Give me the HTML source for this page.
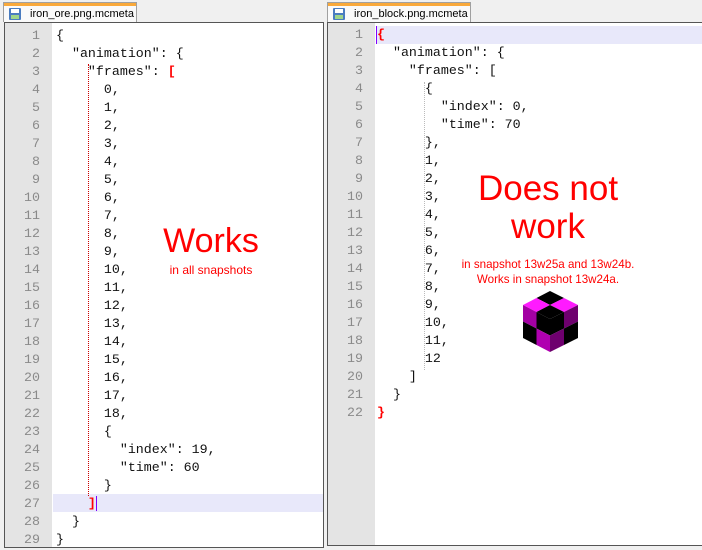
<!DOCTYPE html>
<html><head><style>
body{margin:0;width:702px;height:550px;background:#f0f0f0;position:relative;overflow:hidden;font-family:"Liberation Mono",monospace}
.a{position:absolute}
.tab{position:absolute;top:2px;height:19px;background:#fafafa;border:1px solid #a0a0a0;border-bottom:none;font:11px "Liberation Sans",sans-serif;color:#000}
.tab .o{position:absolute;left:0;right:0;top:0;height:3px;background:#f9a93b}
.tab span{position:absolute;left:26px;top:5px}
.ico{position:absolute;left:5px;top:5px;width:12px;height:12px;background:#4a7cc0;border-radius:1px}
.ico:before{content:"";position:absolute;left:2px;top:1px;width:8px;height:4px;background:#fff}
.ico:after{content:"";position:absolute;left:2px;top:7px;width:8px;height:4px;background:#9fd58a}
.ed{position:absolute;background:#fff;border:1px solid #555}
.g{position:absolute;left:0;top:0;bottom:0;width:47px;background:#e4e4e4}
.ln{position:absolute;width:35px;text-align:right;font-size:13.3px;color:#8a8a8a;line-height:18px}
.code{position:absolute;font-size:13.3px;line-height:18px;white-space:pre;color:#111}
.hl{position:absolute;height:18px;background:#e8e8fa}
.r{color:#f00;font-weight:bold}
.big{position:absolute;color:#f00;font-family:"Liberation Sans",sans-serif;text-align:center}
</style></head><body>
<div class="tab" style="left:3px;width:132px"><div class="o"></div><div class="ico"></div><span>iron_ore.png.mcmeta</span></div>
<div class="tab" style="left:327px;width:142px"><div class="o"></div><div class="ico"></div><span>iron_block.png.mcmeta</span></div>

<div class="ed" style="left:4px;top:22px;width:318px;height:524px">
<div class="g"></div>
<div class="hl" style="left:48px;right:0;top:471px"></div>
<div class="a" style="left:83px;top:41px;height:432px;border-left:1px dotted #c00"></div>
<div class="ln" style="left:0;top:4px">1<br>2<br>3<br>4<br>5<br>6<br>7<br>8<br>9<br>10<br>11<br>12<br>13<br>14<br>15<br>16<br>17<br>18<br>19<br>20<br>21<br>22<br>23<br>24<br>25<br>26<br>27<br>28<br>29</div>
<div class="code" style="left:51px;top:4px">{
  "animation": {
    "frames": <span class="r">[</span>
      0,
      1,
      2,
      3,
      4,
      5,
      6,
      7,
      8,
      9,
      10,
      11,
      12,
      13,
      14,
      15,
      16,
      17,
      18,
      {
        "index": 19,
        "time": 60
      }
    <span class="r">]</span><span style="border-left:1px solid #8000ff"></span>
  }
}</div>
</div>

<div class="ed" style="left:327px;top:22px;width:376px;height:522px;border-right:none">
<div class="g"></div>
<div class="hl" style="left:48px;right:0;top:3px"></div>
<div class="a" style="left:48px;top:3px;height:18px;border-left:1px solid #8000ff"></div>
<div class="a" style="left:96px;top:59px;height:288px;border-left:1px dotted #bbb"></div>
<div class="ln" style="left:0;top:3px">1<br>2<br>3<br>4<br>5<br>6<br>7<br>8<br>9<br>10<br>11<br>12<br>13<br>14<br>15<br>16<br>17<br>18<br>19<br>20<br>21<br>22</div>
<div class="code" style="left:49px;top:3px"><span class="r">{</span>
  "animation": {
    "frames": [
      {
        "index": 0,
        "time": 70
      },
      1,
      2,
      3,
      4,
      5,
      6,
      7,
      8,
      9,
      10,
      11,
      12
    ]
  }
<span class="r">}</span></div>
</div>

<div class="big" style="left:131px;top:222px;width:160px;font-size:34px">Works</div>
<div class="big" style="left:131px;top:263px;width:160px;font-size:12px">in all snapshots</div>
<div class="big" style="left:438px;top:170px;width:220px;font-size:35px;line-height:38px">Does not<br>work</div>
<div class="big" style="left:438px;top:257px;width:220px;font-size:11.6px;line-height:15px">in snapshot 13w25a and 13w24b.<br>Works in snapshot 13w24a.</div>

<svg class="a" style="left:0;top:0" width="702" height="550">
<polygon points="550,291 564,298 550,305 536.5,298" fill="#000"/>
<polygon points="564,298 578,305 564,312 550,305" fill="#ff1aff"/>
<polygon points="536.5,298 550,305 536.5,312 523,305" fill="#ff1aff"/>
<polygon points="550,305 564,312 550,319 536.5,312" fill="#000"/>
<polygon points="523,305 536.5,312 536.5,328.5 523,321.5" fill="#a300a3"/>
<polygon points="536.5,312 550,319 550,335.5 536.5,328.5" fill="#000"/>
<polygon points="523,321.5 536.5,328.5 536.5,345 523,338" fill="#000"/>
<polygon points="536.5,328.5 550,335.5 550,352 536.5,345" fill="#b000b0"/>
<polygon points="550,319 564,312 564,328.5 550,335.5" fill="#000"/>
<polygon points="564,312 578,305 578,321.5 564,328.5" fill="#6e006e"/>
<polygon points="550,335.5 564,328.5 564,345 550,352" fill="#6e006e"/>
<polygon points="564,328.5 578,321.5 578,338 564,345" fill="#000"/>
</svg>
</body></html>
